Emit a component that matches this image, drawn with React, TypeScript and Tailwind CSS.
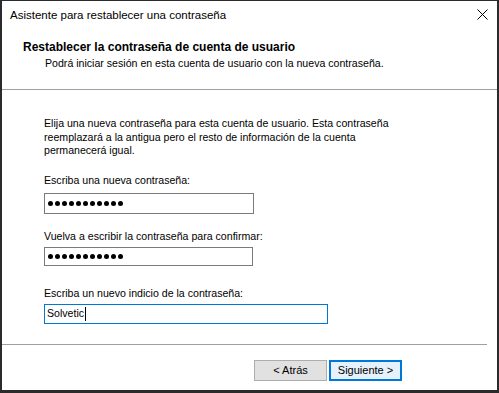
import React from 'react'

const ui = { fontFamily: '"Liberation Sans", Arial, sans-serif' }

function Dots({ count }: { count: number }) {
  return (
    <div className="flex items-center gap-[2px]">
      {Array.from({ length: count }).map((_, i) => (
        <span key={i} className="block h-[5px] w-[5px] rounded-full bg-black" />
      ))}
    </div>
  )
}

export default function App() {
  return (
    <div
      className="relative flex h-[393px] w-[499px] flex-col overflow-hidden border-b-[3px] border-l-2 border-r-2 border-t border-[#2b2b2b] bg-white text-black"
      style={ui}
    >
      {/* title bar */}
      <div className="flex h-[30px] shrink-0 items-center justify-between pl-[8px] pr-[9px]">
        <span className="text-[11.5px]">Asistente para restablecer una contraseña</span>
        <svg width="11" height="11" viewBox="0 0 11 11" className="mb-[3px]">
          <path d="M0.5 0.5 L10.5 10.5 M10.5 0.5 L0.5 10.5" stroke="#000" strokeWidth="1" />
        </svg>
      </div>

      {/* header */}
      <div className="h-[58px] shrink-0 pl-[21px] pt-[10px]">
        <div className="text-[12px] font-bold leading-[13px]">Restablecer la contraseña de cuenta de usuario</div>
        <div className="mt-[3px] pl-[22px] text-[10.6px] leading-[13px]">
          Podrá iniciar sesión en esta cuenta de usuario con la nueva contraseña.
        </div>
      </div>
      <div className="h-px shrink-0 bg-[#a0a0a0]" />

      {/* body */}
      <div className="flex-1 pl-[42px] pt-[27px] text-[10.6px]">
        <p className="w-[360px] leading-[13.5px]">
          Elija una nueva contraseña para esta cuenta de usuario. Esta contraseña reemplazará a la antigua pero el resto de información de la cuenta permanecerá igual.
        </p>

        <div className="mt-[16px] leading-[13px]">Escriba una nueva contraseña:</div>
        <div className="mt-[6px] flex h-[21px] w-[210px] items-center border border-[#7a7a7a] pl-[3px]">
          <Dots count={11} />
        </div>

        <div className="mt-[16px] leading-[13px]">Vuelva a escribir la contraseña para confirmar:</div>
        <div className="mt-[4px] flex h-[19px] w-[209px] items-center border border-[#7a7a7a] pl-[3px]">
          <Dots count={11} />
        </div>

        <div className="mt-[21px] leading-[13px]">Escriba un nuevo indicio de la contraseña:</div>
        <div className="mt-[4px] flex h-[20px] w-[284px] items-center border border-[#0078d7] pl-[2px]">
          <span>Solvetic</span>
          <span className="ml-[1px] block h-[14px] w-px bg-black" />
        </div>
      </div>

      {/* footer */}
      <div className="mr-[10px] h-px shrink-0 bg-[#a0a0a0]" />
      <div className="flex h-[45px] shrink-0 items-start gap-[2px] pl-[252px] pt-[15px]">
        <button className="h-[21px] w-[73px] border border-[#adadad] bg-[#e1e1e1] text-[11px]">&lt; Atrás</button>
        <button className="h-[21px] w-[73px] border-2 border-[#0078d7] bg-[#e5f1fb] text-[11px]">Siguiente &gt;</button>
      </div>
    </div>
  )
}
